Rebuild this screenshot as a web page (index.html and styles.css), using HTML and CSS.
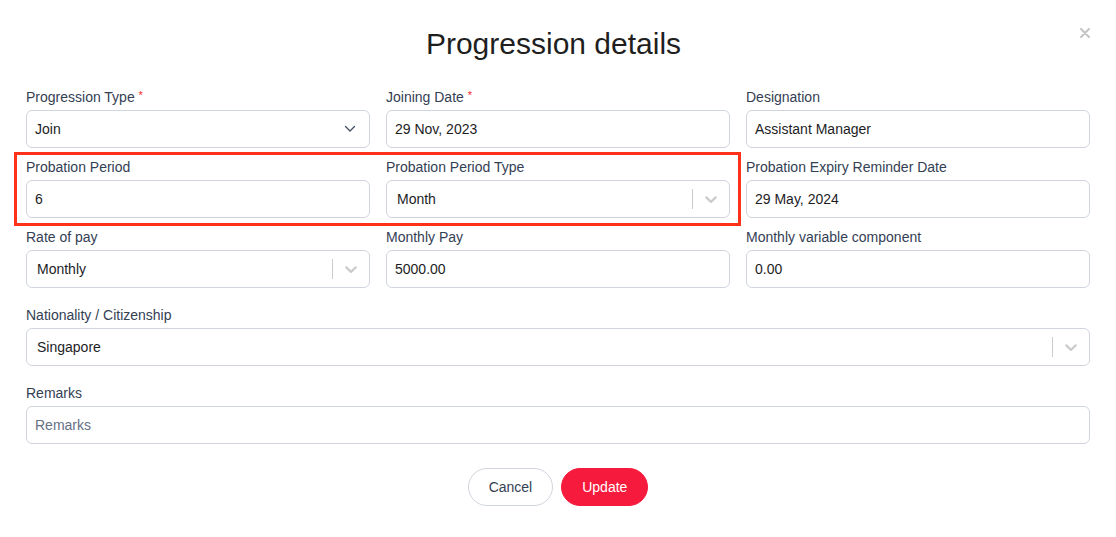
FILE: index.html
```html
<!DOCTYPE html>
<html lang="en">
<head>
<meta charset="utf-8">
<title>Progression details</title>
<link rel="stylesheet" href="styles.css">
</head>
<body>
<div class="modal">
  <button class="close" aria-label="Close">
    <svg width="10" height="10" viewBox="0 0 10 10"><path d="M1 1L9 9M9 1L1 9" stroke="#c4c4c4" stroke-width="2" stroke-linecap="round"/></svg>
  </button>
  <h1 class="title">Progression details</h1>

  <div class="grid">
    <div class="field">
      <label class="label">Progression Type <span class="req">*</span></label>
      <div class="control native">
        <span class="value">Join</span>
        <svg class="native-chev" width="12" height="8" viewBox="0 0 12 8"><path d="M1.5 1.5L6 6L10.5 1.5" fill="none" stroke="#475467" stroke-width="1.4" stroke-linecap="round" stroke-linejoin="round"/></svg>
      </div>
    </div>
    <div class="field">
      <label class="label">Joining Date <span class="req">*</span></label>
      <div class="control"><span class="value">29 Nov, 2023</span></div>
    </div>
    <div class="field">
      <label class="label">Designation</label>
      <div class="control"><span class="value">Assistant Manager</span></div>
    </div>

    <div class="field">
      <label class="label">Probation Period</label>
      <div class="control"><span class="value">6</span></div>
    </div>
    <div class="field">
      <label class="label">Probation Period Type</label>
      <div class="control rs">
        <span class="value">Month</span>
        <span class="sep"></span>
        <span class="ind"><svg width="20" height="20" viewBox="0 0 20 20"><path fill="#cccccc" d="M4.516 7.548c0.436-0.446 1.043-0.481 1.576 0l3.908 3.747 3.908-3.747c0.533-0.481 1.141-0.446 1.574 0 0.436 0.445 0.408 1.197 0 1.615-0.406 0.418-4.695 4.502-4.695 4.502-0.217 0.223-0.502 0.335-0.787 0.335s-0.57-0.112-0.789-0.335c0 0-4.287-4.084-4.695-4.502s-0.436-1.170 0-1.615z"/></svg></span>
      </div>
    </div>
    <div class="field">
      <label class="label">Probation Expiry Reminder Date</label>
      <div class="control"><span class="value">29 May, 2024</span></div>
    </div>

    <div class="field">
      <label class="label">Rate of pay</label>
      <div class="control rs">
        <span class="value">Monthly</span>
        <span class="sep"></span>
        <span class="ind"><svg width="20" height="20" viewBox="0 0 20 20"><path fill="#cccccc" d="M4.516 7.548c0.436-0.446 1.043-0.481 1.576 0l3.908 3.747 3.908-3.747c0.533-0.481 1.141-0.446 1.574 0 0.436 0.445 0.408 1.197 0 1.615-0.406 0.418-4.695 4.502-4.695 4.502-0.217 0.223-0.502 0.335-0.787 0.335s-0.57-0.112-0.789-0.335c0 0-4.287-4.084-4.695-4.502s-0.436-1.170 0-1.615z"/></svg></span>
      </div>
    </div>
    <div class="field">
      <label class="label">Monthly Pay</label>
      <div class="control"><span class="value">5000.00</span></div>
    </div>
    <div class="field">
      <label class="label">Monthly variable component</label>
      <div class="control"><span class="value">0.00</span></div>
    </div>
  </div>

  <div class="field wide">
    <label class="label">Nationality / Citizenship</label>
    <div class="control rs">
      <span class="value">Singapore</span>
      <span class="sep"></span>
      <span class="ind"><svg width="20" height="20" viewBox="0 0 20 20"><path fill="#cccccc" d="M4.516 7.548c0.436-0.446 1.043-0.481 1.576 0l3.908 3.747 3.908-3.747c0.533-0.481 1.141-0.446 1.574 0 0.436 0.445 0.408 1.197 0 1.615-0.406 0.418-4.695 4.502-4.695 4.502-0.217 0.223-0.502 0.335-0.787 0.335s-0.57-0.112-0.789-0.335c0 0-4.287-4.084-4.695-4.502s-0.436-1.170 0-1.615z"/></svg></span>
    </div>
  </div>

  <div class="field wide">
    <label class="label">Remarks</label>
    <div class="control"><span class="value placeholder">Remarks</span></div>
  </div>

  <div class="actions">
    <button class="btn cancel">Cancel</button>
    <button class="btn update">Update</button>
  </div>

  <div class="highlight"></div>
</div>
</body>
</html>
```
FILE: styles.css
```css
* { box-sizing: border-box; }

html, body {
  margin: 0;
  padding: 0;
  background: #ffffff;
}

body {
  font-family: "Liberation Sans", Arial, Helvetica, sans-serif;
  color: #1d1d1f;
}

.modal {
  position: relative;
  width: 1116px;
  padding: 24px 26px 0 26px;
}

.close {
  position: absolute;
  top: 28px;
  right: 26px;
  width: 10px;
  height: 10px;
  padding: 0;
  border: 0;
  background: none;
  display: flex;
}

.title {
  margin: 0 9px 23px 0;
  font-size: 30px;
  line-height: 40px;
  font-weight: normal;
  text-align: center;
  color: #1f1f1f;
}

.grid {
  display: grid;
  grid-template-columns: repeat(3, 1fr);
  column-gap: 16px;
  row-gap: 9px;
}

.field {
  display: flex;
  flex-direction: column;
}

.field.wide {
  margin-top: 17px;
}

.label {
  display: block;
  height: 20px;
  font-size: 14px;
  line-height: 20px;
  color: #344054;
  margin-bottom: 3px;
}

.req {
  color: #f01f2e;
  font-size: 11px;
  line-height: 0;
  position: relative;
  top: -3px;
}

.control {
  height: 38px;
  border: 1px solid #d0d5dd;
  border-radius: 6px;
  display: flex;
  align-items: center;
  padding-left: 8px;
  font-size: 14px;
  color: #1d1d1f;
  background: #fff;
}

.control .value {
  flex: 1;
}

.placeholder {
  color: #667085;
}

.native {
  padding-right: 13px;
}

.native-chev {
  display: block;
}

.rs {
  padding-left: 10px;
}

.sep {
  width: 1px;
  align-self: stretch;
  margin: 8px 0;
  background: #cccccc;
}

.ind {
  padding: 8px;
  display: flex;
}

.ind svg {
  display: block;
}

.actions {
  display: flex;
  justify-content: center;
  gap: 8px;
  margin-top: 24px;
}

.btn {
  height: 38px;
  padding: 0 20px;
  border-radius: 19px;
  font-family: "Liberation Sans", Arial, sans-serif;
  font-size: 14px;
  cursor: pointer;
}

.cancel {
  background: #fff;
  border: 1px solid #d0d5dd;
  color: #344054;
}

.update {
  background: #f61a3c;
  border: 1px solid #f61a3c;
  color: #fff;
  font-weight: 500;
}

.highlight {
  position: absolute;
  left: 14px;
  top: 152px;
  width: 727px;
  height: 74px;
  border: 3px solid #ff3219;
  pointer-events: none;
}
```
